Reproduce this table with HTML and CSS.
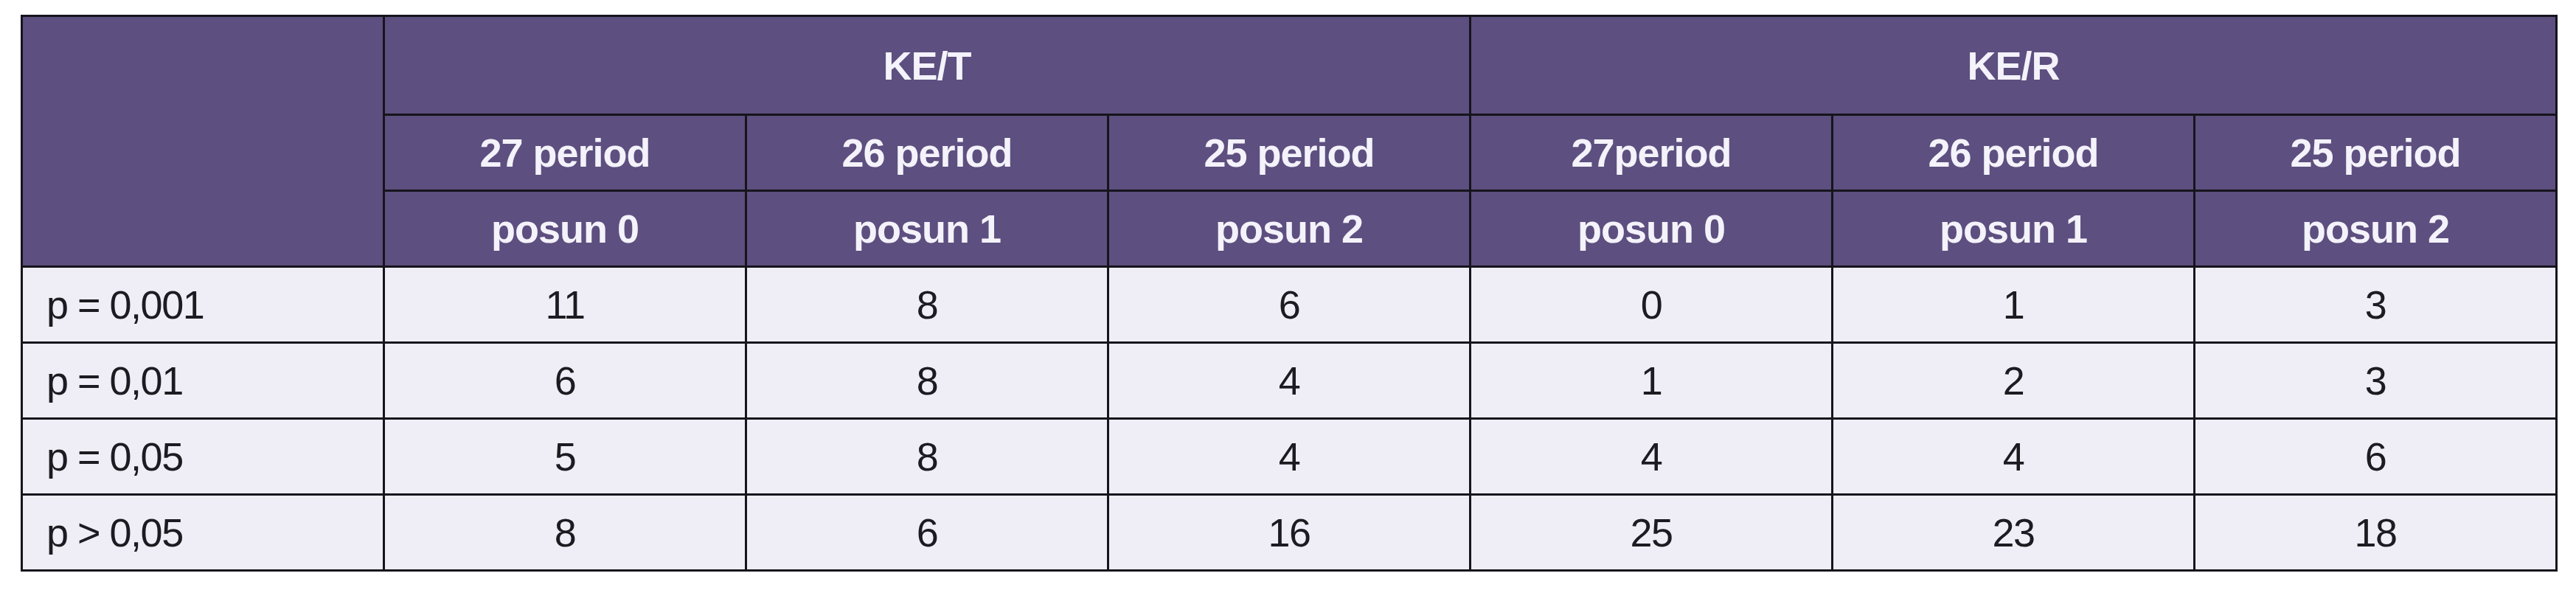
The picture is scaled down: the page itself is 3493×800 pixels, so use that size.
FILE: index.html
```html
<!DOCTYPE html>
<html lang="cs">
<head>
<meta charset="utf-8">
<title>Tabulka</title>
<link rel="stylesheet" href="styles.css">
</head>
<body>
<table class="data">
  <colgroup>
    <col><col><col><col><col><col><col>
  </colgroup>
  <thead>
    <tr class="r-top">
      <th class="blank" rowspan="3"></th>
      <th colspan="3">KE/T</th>
      <th colspan="3">KE/R</th>
    </tr>
    <tr class="r-sub">
      <th>27 period</th>
      <th>26 period</th>
      <th>25 period</th>
      <th>27period</th>
      <th>26 period</th>
      <th>25 period</th>
    </tr>
    <tr class="r-sub">
      <th>posun 0</th>
      <th>posun 1</th>
      <th>posun 2</th>
      <th>posun 0</th>
      <th>posun 1</th>
      <th>posun 2</th>
    </tr>
  </thead>
  <tbody>
    <tr><td class="lbl">p = 0,001</td><td>11</td><td>8</td><td>6</td><td>0</td><td>1</td><td>3</td></tr>
    <tr><td class="lbl">p = 0,01</td><td>6</td><td>8</td><td>4</td><td>1</td><td>2</td><td>3</td></tr>
    <tr><td class="lbl">p = 0,05</td><td>5</td><td>8</td><td>4</td><td>4</td><td>4</td><td>6</td></tr>
    <tr><td class="lbl">p &gt; 0,05</td><td>8</td><td>6</td><td>16</td><td>25</td><td>23</td><td>18</td></tr>
  </tbody>
</table>
</body>
</html>
```
FILE: styles.css
```css
html, body {
  margin: 0;
  padding: 0;
  background: #ffffff;
}

body {
  padding: 20px 0 0 28px;
  font-family: "Liberation Sans", Arial, sans-serif;
}

.data {
  border-collapse: collapse;
  table-layout: fixed;
  width: 3437px;
}

.data col {
  width: 491px;
}

.data th,
.data td {
  border: 3.5px solid #16141c;
  padding: 0;
  text-align: center;
  vertical-align: middle;
  font-size: 54px;
  line-height: 1;
}

.data th {
  background: #5d4f7f;
  color: #f4f2fa;
  font-weight: 700;
  letter-spacing: -1px;
}

.r-top {
  height: 134px;
}

.r-sub {
  height: 103px;
}

.data tbody tr {
  height: 103px;
}

.data td {
  background: #efeef6;
  color: #1c1b21;
  font-weight: 400;
  letter-spacing: -1.5px;
}

.data td.lbl {
  text-align: left;
  padding-left: 32px;
}
```
